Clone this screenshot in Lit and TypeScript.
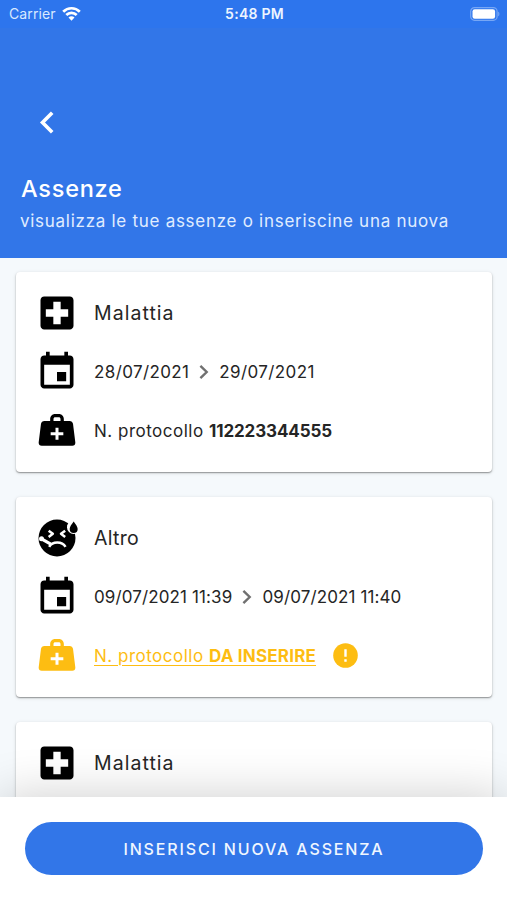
import { LitElement, html, css, svg } from "lit";
import { customElement, property } from "lit/decorators.js";
import { classMap } from "lit/directives/class-map.js";

type IconName = "hospital" | "event" | "bag" | "sick";

const ICONS = {
  hospital: svg`<path fill="currentColor" d="M19 3H5c-1.1 0-2 .9-2 2v14c0 1.1.9 2 2 2h14c1.1 0 2-.9 2-2V5c0-1.1-.9-2-2-2zm-.9 11H14v4.1h-4V14H5.900v-4H10V5.900h4V10h4.100z"/>`,
  event: svg`<path fill="currentColor" d="M17 12h-5v5h5v-5zM16 1v2H8V1H6v2H5c-1.110 0-1.990.9-1.990 2L3 19c0 1.100.890 2 2 2h14c1.100 0 2-.9 2-2V5c0-1.100-.9-2-2-2h-1V1h-2zm3 18H5V8h14v11z"/>`,
  bag: svg`<path fill="currentColor" fill-rule="evenodd" d="M7.900 6V4.800c0-1.700 1.300-3 2.900-3h2.400c1.600 0 2.900 1.300 2.900 3V6h3.400c1.200 0 1.900.7 2.100 1.700l1.400 11.200c.1 1.200-.7 2-1.800 2H2.800c-1.100 0-1.900-.8-1.800-2L2.400 7.700C2.600 6.700 3.300 6 4.500 6zm2 0h4.200V4.900c0-.7-.4-1.100-1.100-1.100h-2c-.7 0-1.100.4-1.100 1.100zm1.200 4v2.700H8.200v1.800h2.900v2.800h1.800v-2.800h2.900v-1.800h-2.900V10z"/>`,
  sick: svg`
    <circle cx="12" cy="12" r="11.100" fill="currentColor"/>
    <circle cx="22" cy="5.600" r="4" fill="#fff"/>
    <path fill="#fff" d="M18.200 4.800 21.800-.6 26 5z"/>
    <path fill="currentColor" d="M22 2.100c1.100 1.600 2.400 3.100 2.400 4.500a2.400 2.400 0 0 1-4.800 0c0-1.400 1.300-2.900 2.400-4.500z"/>
    <path fill="none" stroke="#fff" stroke-width="1.500" stroke-linejoin="round" d="m7 7.600 2.500 1.900L7 11.400M16.900 7.600l-2.500 1.900 2.500 1.900M7.300 17.300c1.900-3.500 7.800-3.500 9.800 0"/>
    <path fill="none" stroke="#fff" stroke-width="1.900" stroke-linecap="round" d="m2.700 12.500 5.300 3"/>
    <circle cx="2.700" cy="12.400" r="1.500" fill="#fff"/>`,
};

interface Absence {
  kind: string;
  icon: IconName;
  from?: string;
  to?: string;
  protocol?: string;
  missing?: boolean;
}

const ABSENCES: Absence[] = [
  { kind: "Malattia", icon: "hospital", from: "28/07/2021", to: "29/07/2021", protocol: "112223344555" },
  { kind: "Altro", icon: "sick", from: "09/07/2021 11:39", to: "09/07/2021 11:40", protocol: "DA INSERIRE", missing: true },
  { kind: "Malattia", icon: "hospital" },
];

@customElement("status-bar")
export class StatusBar extends LitElement {
  static styles = css`
    :host { display: grid; grid-template-columns: 1fr auto 1fr; align-items: center; height: 28px; padding: 0 7px 0 9px; background: #2d75ed; color: #fff; font: 400 14px/28px Inter, sans-serif; }
    .carrier { display: flex; align-items: center; gap: 6px; color: #d8e9ff; letter-spacing: 0.12px; }
    .time { font-weight: 600; font-size: 14px; letter-spacing: 0.25px; color: #edf5ff; }
    .battery { justify-self: end; }
    .wifi { margin-top: -2px; }
    svg { display: block; }
  `;
  render() {
    return html`
      <div class="carrier">Carrier
        <svg class="wifi" width="19" height="15" viewBox="0 0 19 15">
          <path fill="none" stroke="#fff" stroke-width="2.700" d="M1.200 5.700c4.600-4.600 12-4.600 16.600 0M4.300 9c2.900-2.900 7.500-2.900 10.400 0"/>
          <path fill="#fff" d="m9.500 14.700-3-3.200c1.700-1.600 4.300-1.600 6 0z"/>
        </svg>
      </div>
      <div class="time">5:48 PM</div>
      <svg class="battery" width="30" height="15" viewBox="0 0 30 15">
        <rect x=".7" y=".6" width="26.400" height="12.700" rx="3.800" fill="none" stroke="#77a7f5" stroke-width="1.200"/>
        <rect x="2.500" y="2.200" width="22.600" height="9.500" rx="2.200" fill="#fff"/>
        <path fill="#77a7f5" d="M28.200 4.700c1.600.5 1.600 4 0 4.500z"/>
      </svg>`;
  }
}

@customElement("absence-card")
export class AbsenceCard extends LitElement {
  @property({ attribute: false }) item!: Absence;
  static styles = css`
    :host { display: block; height: 200px; box-sizing: border-box; padding: 11px 21px 0; border-radius: 4px; background: #fff; color: #252525; box-shadow: 0 1px 1.500px rgba(0, 0, 0, .38), 0 1px 4px rgba(0, 0, 0, .1); }
    .row { display: flex; align-items: center; height: 59px; font-size: 17px; white-space: nowrap; }
    .icon { width: 40px; height: 40px; flex: none; margin-right: 17px; color: #000; overflow: visible; }
    .icon.large { width: 44px; height: 44px; margin: 0 15px 0 -2px; }
    .kind { font-size: 19.500px; letter-spacing: 0.3px; }
    .kind.spaced { letter-spacing: 1.05px; }
    .date { letter-spacing: 0.38px; }
    .timed { letter-spacing: 0.12px; }
    .arrow { margin: 0 10px; flex: none; }
    .label { letter-spacing: 0.5px; }
    .number { font-weight: 700; letter-spacing: -0.1px; }
    .missing, .missing .icon { color: #fdbd12; }
    .missing .label { text-decoration: underline; text-decoration-thickness: 1px; text-underline-offset: 3px; }
    .missing .number { letter-spacing: 0.2px; }
    .alert { margin-left: 17px; }
  `;
  private icon(name: IconName) {
    const large = name === "hospital" || name === "event";
    return html`<svg class=${classMap({ icon: true, large })} viewBox="0 0 24 24">${ICONS[name]}</svg>`;
  }
  private details(a: Absence) {
    const date = classMap({ date: true, timed: a.from!.length > 10 });
    return html`
      <div class="row">
        ${this.icon("event")}<span class=${date}>${a.from}</span>
        <svg class="arrow" width="10" height="16" viewBox="0 0 10 16"><path fill="none" stroke="#707070" stroke-width="2.400" d="m1.400 1.800 6.300 6.200-6.300 6.200"/></svg>
        <span class=${date}>${a.to}</span>
      </div>
      <div class=${classMap({ row: true, missing: !!a.missing })}>
        ${this.icon("bag")}<span class="label">N. protocollo <span class="number">${a.protocol}</span></span>
        ${a.missing
          ? html`<svg class="alert" width="25" height="25" viewBox="0 0 25 25"><circle cx="12.500" cy="12.500" r="12.300" fill="currentColor"/><path fill="#fff" d="M11.300 6.300h2.400v7.500h-2.400zm0 10h2.400v2.400h-2.400z"/></svg>`
          : null}
      </div>`;
  }
  render() {
    const a = this.item;
    return html`
      <div class="row">${this.icon(a.icon)}<span class=${classMap({ kind: true, spaced: a.kind.length > 5 })}>${a.kind}</span></div>
      ${a.from ? this.details(a) : null}`;
  }
}

@customElement("app-root")
export class AppRoot extends LitElement {
  static styles = css`
    :host { display: flex; flex-direction: column; height: 900px; overflow: hidden; background: #f5f9fc; font-family: Inter, "Open Sans", sans-serif; }
    .header { flex: none; height: 258px; box-sizing: border-box; background: #3276e8; color: #fff; }
    .back { display: block; margin: 83px 0 0 39px; }
    .title { margin: 40px 0 0 21px; font-size: 23.500px; line-height: 30px; font-weight: 500; letter-spacing: 0.75px; }
    .subtitle { margin: 4px 0 0 20px; font-size: 17px; line-height: 26px; letter-spacing: 0.72px; color: #e0edff; white-space: nowrap; }
    .list { flex: 1; min-height: 0; overflow: hidden; display: flex; flex-direction: column; gap: 25px; padding: 14px 15px 0 16px; }
    .list absence-card { flex: none; }
    .footer { position: relative; flex: none; height: 103px; box-sizing: border-box; padding: 25px 24px 0 25px; background: #fff; box-shadow: 0 0 50px rgba(0, 0, 0, .2); }
    .button { display: block; width: 100%; height: 53px; border: 0; border-radius: 27px; background: #3276e8; color: #f0f6ff; font: 500 16px/54px Inter, sans-serif; letter-spacing: 1.850px; padding: 0; }
  `;
  render() {
    return html`
      <div class="header">
        <status-bar></status-bar>
        <svg class="back" width="16" height="23" viewBox="0 0 16 23"><path fill="none" stroke="#fff" stroke-width="3.600" d="m13.200 1.800-9.700 9.700 9.700 9.700"/></svg>
        <div class="title">Assenze</div>
        <div class="subtitle">visualizza le tue assenze o inseriscine una nuova</div>
      </div>
      <div class="list">${ABSENCES.map((a) => html`<absence-card .item=${a}></absence-card>`)}</div>
      <div class="footer"><button class="button">INSERISCI NUOVA ASSENZA</button></div>`;
  }
}
